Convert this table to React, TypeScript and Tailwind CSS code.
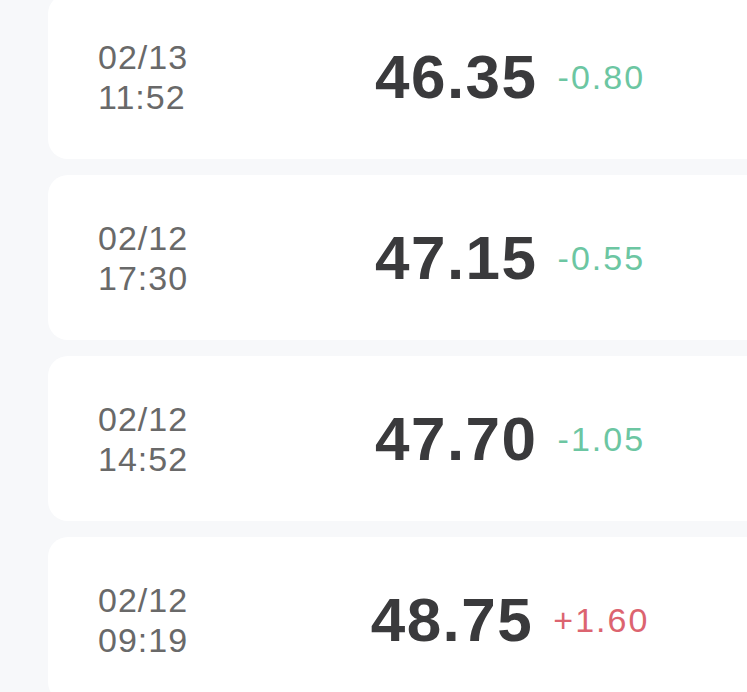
const rows = [
  { date: "02/13", time: "11:52", price: "46.35", change: "-0.80", up: false },
  { date: "02/12", time: "17:30", price: "47.15", change: "-0.55", up: false },
  { date: "02/12", time: "14:52", price: "47.70", change: "-1.05", up: false },
  { date: "02/12", time: "09:19", price: "48.75", change: "+1.60", up: true },
];

const PriceCard = ({ date, time, price, change, up }: (typeof rows)[number]) => {
  return (
    <div className="flex items-center h-[165px] w-[734px] shrink-0 rounded-[20px] bg-white pl-[50px]">
      {/* Date */}
      <div className="w-[140px] flex flex-col text-[34px] leading-[40px] tracking-[1px] text-[#696969]">
        <span>{date}</span>
        <span>{time}</span>
      </div>

      {/* Price + change */}
      <div className="flex-1 flex items-center justify-center gap-[20px]">
        <span className="text-[62px] leading-none font-bold tracking-[1.5px] text-[#3a3a3c]">
          {price}
        </span>
        <span
          className={`text-[34px] leading-none tracking-[2px] ${
            up ? "text-[#dc6470]" : "text-[#6cc6a2]"
          }`}
        >
          {change}
        </span>
      </div>
    </div>
  );
};

export default function App() {
  return (
    <div
      className="w-[747px] h-[692px] overflow-hidden bg-[#f7f8fa]"
      style={{ fontFamily: '"Liberation Sans", Arial, sans-serif' }}
    >
      <div className="flex flex-col gap-[16px] pl-[48px] -mt-[6px]">
        {rows.map((r, i) => (
          <PriceCard key={i} {...r} />
        ))}
      </div>
    </div>
  );
}
